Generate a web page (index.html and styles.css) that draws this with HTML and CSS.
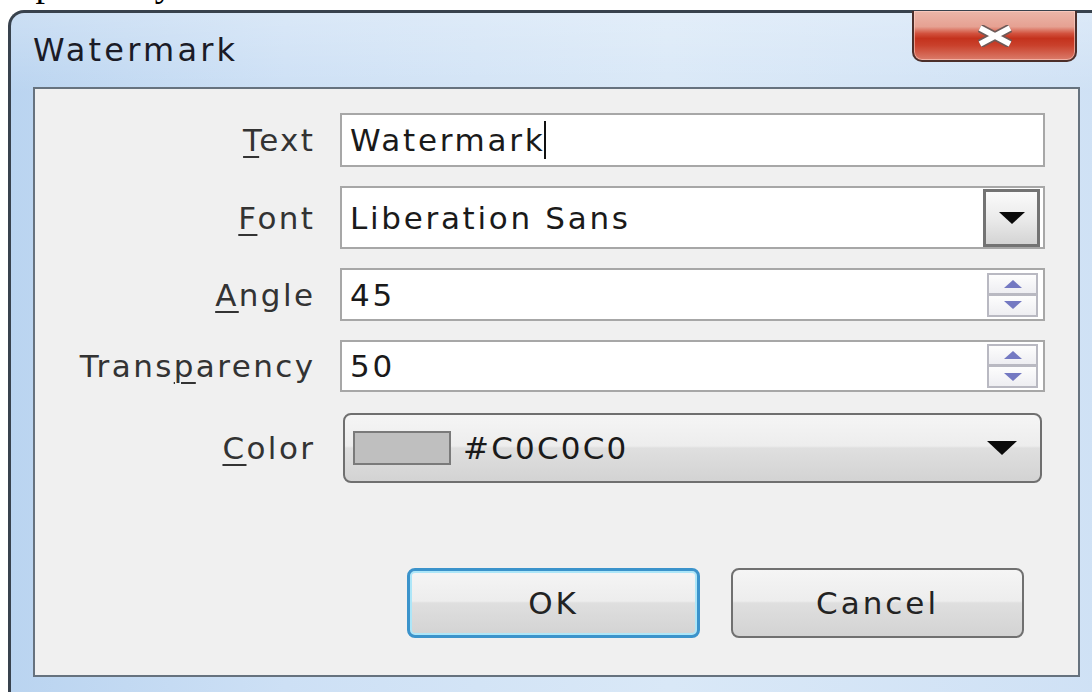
FILE: index.html
```html
<!DOCTYPE html>
<html lang="en">
<head>
<meta charset="utf-8">
<title>Watermark</title>
<link rel="stylesheet" href="styles.css">
</head>
<body>
  <p class="caption"><span>Opened by</span></p>

  <div class="window">
    <div class="titlebar">
      <span class="title">Watermark</span>
      <button class="close" type="button" aria-label="Close">
        <svg width="42" height="22" viewBox="0 0 42 22">
          <path d="M6 3 L36 19 M36 3 L6 19" stroke="#6d5a58" stroke-width="9" fill="none"/>
          <path d="M6 3 L36 19 M36 3 L6 19" stroke="#ffffff" stroke-width="5.5" fill="none"/>
        </svg>
      </button>
    </div>

    <div class="panel">
      <div class="form">
        <label class="label"><u>T</u>ext</label>
        <div class="field field-text">
          <span class="value">Watermark</span><span class="caret"></span>
        </div>

        <label class="label"><u>F</u>ont</label>
        <div class="field field-combo">
          <span class="value">Liberation Sans</span>
          <span class="drop">
            <svg width="26" height="12" viewBox="0 0 26 12"><path d="M0 0 H26 L13 12 Z" fill="#0a0a0a"/></svg>
          </span>
        </div>

        <label class="label"><u>A</u>ngle</label>
        <div class="field field-spin">
          <span class="value">45</span>
          <span class="spin">
            <span class="spin-half"><svg width="18" height="8" viewBox="0 0 18 8"><path d="M0 8 L9 0 L18 8 Z" fill="#7479c2"/></svg></span>
            <span class="spin-half"><svg width="18" height="8" viewBox="0 0 18 8"><path d="M0 0 L18 0 L9 8 Z" fill="#7479c2"/></svg></span>
          </span>
        </div>

        <label class="label">Trans<u>p</u>arency</label>
        <div class="field field-spin field-short">
          <span class="value">50</span>
          <span class="spin">
            <span class="spin-half"><svg width="18" height="8" viewBox="0 0 18 8"><path d="M0 8 L9 0 L18 8 Z" fill="#7479c2"/></svg></span>
            <span class="spin-half"><svg width="18" height="8" viewBox="0 0 18 8"><path d="M0 0 L18 0 L9 8 Z" fill="#7479c2"/></svg></span>
          </span>
        </div>

        <label class="label label-color"><u>C</u>olor</label>
        <button class="color-btn" type="button">
          <span class="swatch"></span>
          <span class="color-name">#C0C0C0</span>
          <svg class="color-arrow" width="30" height="14" viewBox="0 0 30 14"><path d="M0 0 H30 L15 14 Z" fill="#0a0a0a"/></svg>
        </button>
      </div>

      <div class="actions">
        <button class="btn btn-default" type="button">OK</button>
        <button class="btn" type="button">Cancel</button>
      </div>
    </div>
  </div>
</body>
</html>
```

FILE: styles.css
```css
html, body {
  margin: 0;
  height: 100%;
  overflow: hidden;
  background: #ffffff;
}

body {
  font-family: "DejaVu Sans", "Noto Sans", sans-serif;
}

/* line of page text above the dialog, scrolled so only its descenders show */
.caption {
  margin: 0;
  height: 10px;
  overflow: hidden;
  padding-left: 8px;
  font: 38px/40px "Liberation Serif", serif;
  color: #000;
}

.caption span {
  display: block;
  margin-top: -37px;
}

/* window frame */
.window {
  margin-left: 8px;
  width: 1100px;
  height: 700px;
  box-sizing: border-box;
  border: 3px solid #38424d;
  border-right: 0;
  border-bottom: 0;
  border-top-left-radius: 16px;
  background:
    linear-gradient(180deg, rgba(255,255,255,0.25) 0, rgba(255,255,255,0) 80px),
    linear-gradient(90deg, #bad4f0 0, #cde0f5 25%, #d9e8f7 60%, #cfe1f5 100%);
}

.titlebar {
  display: flex;
  align-items: flex-start;
  height: 74px;
}

.title {
  margin-top: 18px;
  padding-left: 22px;
  font-size: 32px;
  line-height: 38px;
  letter-spacing: 3.2px;
  color: #1b1b27;
}

.close {
  margin-left: auto;
  margin-right: 31px;
  margin-top: -2px;
  width: 165px;
  height: 51px;
  padding: 0;
  box-sizing: border-box;
  border: 2px solid #4c2f2b;
  border-top: 0;
  border-radius: 0 0 10px 10px;
  background: linear-gradient(180deg, #ebb6a9 0%, #e6a192 32%, #d2513d 46%, #c4321d 56%, #c9402b 70%, #db7c6b 100%);
  display: flex;
  align-items: center;
  justify-content: center;
  box-shadow: inset 0 0 0 1px rgba(255,210,200,0.6);
}

/* dialog client area */
.panel {
  margin-left: 22px;
  width: 1047px;
  height: 590px;
  box-sizing: border-box;
  border: 2px solid #66727e;
  background: #f0f0f0;
  padding-top: 24px;
}

.form {
  display: grid;
  grid-template-columns: 278px 705px;
  column-gap: 27px;
  row-gap: 19px;
}

.label {
  justify-self: end;
  align-self: center;
  margin-right: -2.4px;
  font-size: 31px;
  letter-spacing: 2.4px;
  color: #333333;
}

.label u {
  text-decoration-thickness: 2px;
  text-underline-offset: 5px;
}

.label-color {
  margin-top: 2px;
}

.field {
  display: flex;
  align-items: center;
  box-sizing: border-box;
  height: 54px;
  padding-left: 8px;
  border: 2px solid #a7a7a7;
  background: #ffffff;
  font-size: 31px;
  letter-spacing: 2.7px;
  color: #1a1a1a;
}

.value {
  flex: 1;
  white-space: nowrap;
}

.field-text .value {
  flex: none;
}

.caret {
  width: 2px;
  height: 38px;
  margin-left: -1px;
  background: #111;
}

.field-combo {
  height: 63px;
  padding-right: 3px;
}

.drop {
  display: flex;
  align-items: center;
  justify-content: center;
  box-sizing: border-box;
  width: 57px;
  height: 58px;
  border: 3px solid #737373;
  background: linear-gradient(180deg, #fafafa 0%, #ebebeb 50%, #d4d4d4 100%);
}

.field-spin {
  height: 53px;
  padding-right: 5px;
}

.field-short {
  height: 52px;
}

.spin {
  display: flex;
  flex-direction: column;
  width: 51px;
}

.spin-half {
  display: flex;
  align-items: center;
  justify-content: center;
  box-sizing: border-box;
  height: 22px;
  border: 2px solid #b9b9c2;
  background: linear-gradient(180deg, #fdfdfd 0%, #eeeef2 100%);
}

.spin-half + .spin-half {
  border-top-width: 1px;
}

/* colour picker button */
.color-btn {
  display: flex;
  align-items: center;
  box-sizing: border-box;
  margin: 2px 3px 0;
  height: 70px;
  padding: 0 23px 0 8px;
  border: 2px solid #6f6f6f;
  border-radius: 8px;
  background: linear-gradient(180deg, #f5f5f5 0%, #ededed 47%, #dfdfdf 50%, #d3d3d3 100%);
  font-family: inherit;
  font-size: 31px;
  letter-spacing: 2.2px;
  color: #1a1a1a;
}

.swatch {
  box-sizing: border-box;
  width: 98px;
  height: 34px;
  border: 2px solid #7a7a7a;
  background: #bfbfbf;
}

.color-name {
  flex: 1;
  margin-left: 12px;
  text-align: left;
}

/* OK / Cancel */
.actions {
  display: flex;
  justify-content: flex-end;
  gap: 31px;
  margin-top: 85px;
  padding-right: 54px;
}

.btn {
  box-sizing: border-box;
  width: 293px;
  height: 70px;
  border: 2px solid #707070;
  border-radius: 8px;
  background: linear-gradient(180deg, #f5f5f5 0%, #ededed 47%, #dfdfdf 50%, #d3d3d3 100%);
  font-family: inherit;
  font-size: 31px;
  letter-spacing: 3px;
  color: #232323;
}

.btn-default {
  border: 3px solid #3b93cb;
  box-shadow: inset 0 0 0 2px #ade6f8;
}
```
